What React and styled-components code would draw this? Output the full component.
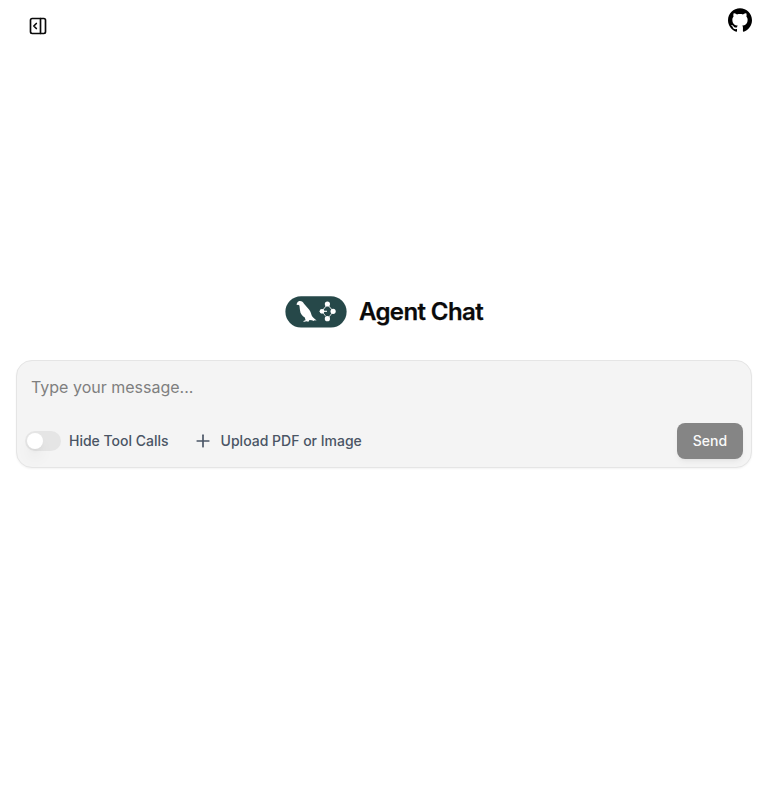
import React from "react";
import styled, { createGlobalStyle } from "styled-components";
import { PanelRightOpen, Plus } from "lucide-react";

const GlobalStyle = createGlobalStyle`
  *, *::before, *::after { box-sizing: border-box; }
  body {
    margin: 0;
    background: #fff;
    color: #0a0a0a;
    font-family: Inter, sans-serif;
    -webkit-font-smoothing: antialiased;
  }
  button, textarea { font: inherit; }
`;

const Page = styled.div`
  display: flex;
  flex-direction: column;
  height: 100vh;
  overflow: hidden;
`;

const Header = styled.header`
  display: flex;
  align-items: flex-start;
  justify-content: space-between;
  height: 56px;
  padding: 8px 16px 0 20px;
`;

const IconButton = styled.button`
  display: grid;
  place-items: center;
  width: 36px;
  height: 36px;
  padding: 0;
  border: 0;
  background: transparent;
  color: #0a0a0a;
`;

const GitHubLink = styled.a`
  display: block;
  height: 24px;
  color: #000;
`;

const Main = styled.main`
  display: flex;
  flex-direction: column;
  gap: 32px;
  padding: 240px 16px 0;
`;

const Brand = styled.div`
  display: flex;
  align-items: center;
  justify-content: center;
  gap: 12px;
  height: 32px;
`;

const Title = styled.h1`
  margin: 0;
  font-size: 24px;
  line-height: 32px;
  font-weight: 600;
  letter-spacing: -0.6px;
  -webkit-text-stroke: 0.25px currentColor;
`;

const Composer = styled.form`
  display: flex;
  flex-direction: column;
  height: 108px;
  border: 1px solid #e5e5e5;
  border-radius: 16px;
  background: #f4f4f4;
  box-shadow: 0 1px 2px rgba(0, 0, 0, 0.05);
`;

const MessageInput = styled.textarea`
  display: block;
  width: 100%;
  height: 54px;
  padding: 14px 14px 0;
  border: 0;
  outline: 0;
  resize: none;
  background: transparent;
  font-size: 16px;
  line-height: 24px;
  &::placeholder { color: #7f7f7f; opacity: 1; }
`;

const Toolbar = styled.div`
  display: flex;
  align-items: center;
  gap: 24px;
  padding: 8px;
`;

const Option = styled.label`
  display: flex;
  align-items: center;
  gap: 8px;
  color: #4a5565;
  font-size: 14px;
  line-height: 20px;
  font-weight: 500;
`;

const Switch = styled.span`
  display: flex;
  align-items: center;
  width: 36px;
  height: 20px;
  padding: 2px;
  border-radius: 10px;
  background: #e5e5e5;
`;

const Thumb = styled.span`
  width: 16px;
  height: 16px;
  border-radius: 50%;
  background: #fff;
  box-shadow: 0 10px 15px -3px rgba(0, 0, 0, 0.1), 0 4px 6px -4px rgba(0, 0, 0, 0.1);
`;

const SendButton = styled.button`
  width: 66px;
  height: 36px;
  margin-left: auto;
  padding: 0;
  border: 0;
  border-radius: 8px;
  background: #858585;
  color: #fafafa;
  font-size: 14px;
  line-height: 20px;
  font-weight: 500;
  box-shadow: 0 4px 6px -1px rgba(0, 0, 0, 0.05), 0 2px 4px -2px rgba(0, 0, 0, 0.05);
`;

function GraphLogo() {
  return (
    <svg width="62" height="32" viewBox="0 0 62 32" aria-hidden="true">
      <rect x="0.4" y="0.2" width="61.2" height="31.3" rx="15.65" fill="#264849" />
      <path
        fill="#fff"
        d="M11.3 8.2C12.2 7.6 12.3 5 15 5C17 5 18.1 6 18.8 7.6L24 13.4C25.7 15.4 26 17.2 26.6 19.2C27.4 21.2 29.8 22.6 31.6 24.6L29.4 24.2L29 25L26.8 24.3L24.5 24L23.4 25.8L21.4 25.3L18.3 26L18.9 24.8L20.6 24.2L19.8 21.4C17.2 19.8 15.3 17.8 15 14.2L14.4 9.4C13.4 8.8 12.3 8.9 11.3 8.2Z"
      />
      <g stroke="#fff" fill="none">
        <path d="M37 15L42.4 8.5L48.1 15" strokeWidth="0.9" />
        <path d="M37 15.3H42" strokeWidth="1.1" />
        <path d="M38 16.7L40.8 20.4M47 17L44.2 20.8" strokeWidth="0.8" />
      </g>
      <g fill="#fff">
        <circle cx="42.4" cy="8" r="2.6" />
        <circle cx="37" cy="15.3" r="2.4" />
        <circle cx="48.1" cy="15.3" r="2.6" />
        <circle cx="42.4" cy="22.7" r="2.6" />
      </g>
    </svg>
  );
}

function GitHubMark() {
  return (
    <svg width="24" height="24" viewBox="0 0 24 24" fill="currentColor" aria-hidden="true">
      <path d="M12 .297c-6.63 0-12 5.373-12 12 0 5.303 3.438 9.8 8.205 11.385.6.113.82-.258.82-.577 0-.285-.01-1.04-.015-2.04-3.338.724-4.042-1.61-4.042-1.61C4.422 18.07 3.633 17.7 3.633 17.7c-1.087-.744.084-.729.084-.729 1.205.084 1.838 1.236 1.838 1.236 1.07 1.835 2.809 1.305 3.495.998.108-.776.417-1.305.76-1.605-2.665-.3-5.466-1.332-5.466-5.93 0-1.31.465-2.38 1.235-3.22-.135-.303-.54-1.523.105-3.176 0 0 1.005-.322 3.3 1.23.96-.267 1.98-.399 3-.405 1.02.006 2.04.138 3 .405 2.28-1.552 3.285-1.23 3.285-1.23.645 1.653.24 2.873.12 3.176.765.84 1.23 1.91 1.23 3.22 0 4.61-2.805 5.625-5.475 5.92.42.36.81 1.096.81 2.22 0 1.606-.015 2.896-.015 3.286 0 .315.21.69.825.57C20.565 22.092 24 17.592 24 12.297c0-6.627-5.373-12-12-12" />
    </svg>
  );
}

export default function App() {
  return (
    <Page>
      <GlobalStyle />
      <Header>
        <IconButton type="button" aria-label="Open history">
          <PanelRightOpen size={20} />
        </IconButton>
        <GitHubLink aria-label="GitHub">
          <GitHubMark />
        </GitHubLink>
      </Header>
      <Main>
        <Brand>
          <GraphLogo />
          <Title>Agent Chat</Title>
        </Brand>
        <Composer>
          <MessageInput placeholder="Type your message..." />
          <Toolbar>
            <Option>
              <Switch role="switch" aria-checked="false">
                <Thumb />
              </Switch>
              Hide Tool Calls
            </Option>
            <Option>
              <Plus size={20} />
              Upload PDF or Image
            </Option>
            <SendButton type="button">Send</SendButton>
          </Toolbar>
        </Composer>
      </Main>
    </Page>
  );
}
